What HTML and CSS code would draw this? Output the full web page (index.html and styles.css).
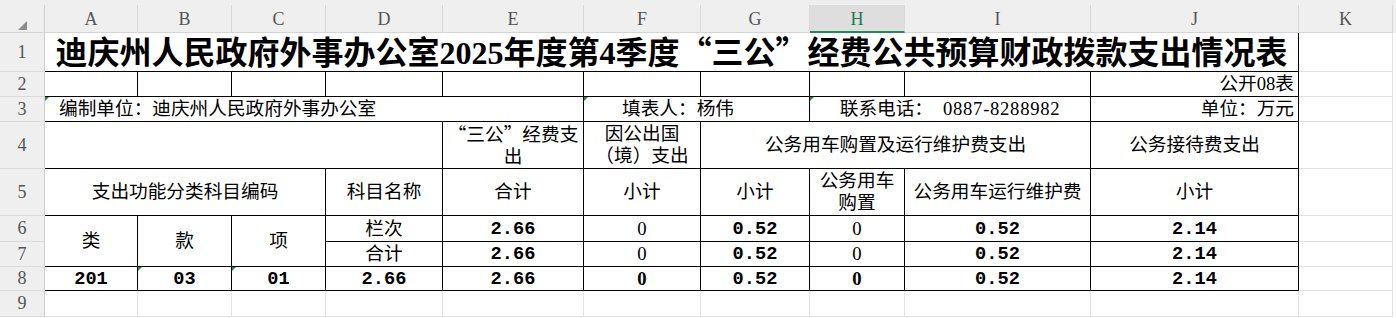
FILE: index.html
```html
<!DOCTYPE html>
<html lang="zh-CN">
<head>
<meta charset="utf-8">
<title>迪庆州人民政府外事办公室2025年度第4季度“三公”经费公共预算财政拨款支出情况表</title>
<link rel="stylesheet" href="styles.css">
</head>
<body>
<div class="sheet">
  <div class="strip"></div>

  <div class="ch corner"><span class="tri"></span></div>
  <div class="ch">A</div>
  <div class="ch">B</div>
  <div class="ch">C</div>
  <div class="ch">D</div>
  <div class="ch">E</div>
  <div class="ch">F</div>
  <div class="ch">G</div>
  <div class="ch sel">H</div>
  <div class="ch">I</div>
  <div class="ch">J</div>
  <div class="ch">K</div>

  <div class="rh">1</div>
  <div class="c s10 R B title"><span class="w">迪庆州人民政府外事办公室2025年度第4季度<span class="q">“</span>三公<span class="q">”</span>经费公共预算财政拨款支出情况表</span></div>
  <div class="c"></div>

  <div class="rh">2</div>
  <div class="c R B"></div>
  <div class="c R B"></div>
  <div class="c R B"></div>
  <div class="c R B"></div>
  <div class="c R B"></div>
  <div class="c R B"></div>
  <div class="c R B"></div>
  <div class="c R B"></div>
  <div class="c R B"></div>
  <div class="c R B right">公开08表</div>
  <div class="c"></div>

  <div class="rh">3</div>
  <div class="c s5 R B left flag unit">编制单位：迪庆州人民政府外事办公室</div>
  <div class="c s2 R B left flag filler">填表人：杨伟</div>
  <div class="c s2 R B flag phone"><span class="w">联系电话：<span class="tel">0887-8288982</span></span></div>
  <div class="c R B right">单位：万元</div>
  <div class="c"></div>

  <div class="rh">4</div>
  <div class="c s4 R B"></div>
  <div class="c R B wrap"><span class="w"><span class="q">“</span>三公<span class="q">”</span>经费支<br>出</span></div>
  <div class="c R B wrap"><span class="w">因公出国<br>（境）支出</span></div>
  <div class="c s3 R B">公务用车购置及运行维护费支出</div>
  <div class="c R B">公务接待费支出</div>
  <div class="c"></div>

  <div class="rh">5</div>
  <div class="c s3 R B">支出功能分类科目编码</div>
  <div class="c R B">科目名称</div>
  <div class="c R B">合计</div>
  <div class="c R B">小计</div>
  <div class="c R B">小计</div>
  <div class="c R B wrap"><span class="w">公务用车<br>购置</span></div>
  <div class="c R B">公务用车运行维护费</div>
  <div class="c R B">小计</div>
  <div class="c"></div>

  <div class="rh">6</div>
  <div class="c r2 R B">类</div>
  <div class="c r2 R B">款</div>
  <div class="c r2 R B">项</div>
  <div class="c R B">栏次</div>
  <div class="c R B n">2.66</div>
  <div class="c R B">0</div>
  <div class="c R B n">0.52</div>
  <div class="c R B">0</div>
  <div class="c R B n">0.52</div>
  <div class="c R B n">2.14</div>
  <div class="c"></div>

  <div class="rh">7</div>
  <div class="c R B">合计</div>
  <div class="c R B n">2.66</div>
  <div class="c R B">0</div>
  <div class="c R B n">0.52</div>
  <div class="c R B">0</div>
  <div class="c R B n">0.52</div>
  <div class="c R B n">2.14</div>
  <div class="c"></div>

  <div class="rh">8</div>
  <div class="c R B n">201</div>
  <div class="c R B n flag">03</div>
  <div class="c R B n flag">01</div>
  <div class="c R B n">2.66</div>
  <div class="c R B n">2.66</div>
  <div class="c R B bz">0</div>
  <div class="c R B n">0.52</div>
  <div class="c R B bz">0</div>
  <div class="c R B n">0.52</div>
  <div class="c R B n">2.14</div>
  <div class="c"></div>

  <div class="rh">9</div>
  <div class="c"></div>
  <div class="c"></div>
  <div class="c"></div>
  <div class="c"></div>
  <div class="c"></div>
  <div class="c"></div>
  <div class="c"></div>
  <div class="c"></div>
  <div class="c"></div>
  <div class="c"></div>
  <div class="c"></div>
</div>
</body>
</html>
```

FILE: styles.css
```css
* {
  box-sizing: border-box;
  margin: 0;
  padding: 0;
}

html, body {
  width: 1396px;
  height: 318px;
  overflow: hidden;
}

body {
  background: linear-gradient(#efefef 0, #efefef 33px, #ffffff 33px);
}

.sheet {
  display: grid;
  width: 1393px;
  grid-template-columns: 45px 93px 94px 94px 117px 141px 117px 109px 95px 186px 208px 94px;
  grid-template-rows: 5px 28px 39px 25px 25px 47px 47px 26px 25px 24px 26px;
  font-family: "Liberation Serif", "Noto Sans CJK SC", serif;
  font-size: 18.67px;
  color: #000;
  background: #fff;
}

.strip {
  grid-column: 1 / -1;
  background: #efefef;
}

.ch {
  background: #efefef;
  border-right: 1px solid #d9d9d9;
  border-bottom: 1px solid #d5d5d5;
  color: #555;
  font-size: 18px;
  display: flex;
  align-items: center;
  justify-content: center;
  padding-top: 2px;
}

.ch.sel {
  background: #dedede;
  color: #1b7d52;
  border-bottom: 2px solid #1e8b5b;
}

.corner {
  position: relative;
  border-right-color: #cfcfcf;
}

.tri {
  position: absolute;
  left: 18px;
  top: 16px;
  width: 0;
  height: 0;
  border-left: 9px solid transparent;
  border-bottom: 9px solid #8c8c8c;
}

.rh {
  grid-column: 1;
  background: #efefef;
  border-right: 1px solid #cfcfcf;
  border-bottom: 1px solid #dadada;
  color: #555;
  font-size: 18px;
  display: flex;
  align-items: center;
  justify-content: center;
}

.c {
  position: relative;
  border-right: 1px solid #e2e2e2;
  border-bottom: 1px solid #e2e2e2;
  display: flex;
  align-items: center;
  justify-content: center;
  text-align: center;
  line-height: 22px;
  white-space: nowrap;
}

.w {
  display: block;
  text-align: center;
}

.R { border-right-color: #000; }
.B { border-bottom-color: #000; }

.s2 { grid-column: span 2; }
.s3 { grid-column: span 3; }
.s4 { grid-column: span 4; }
.s5 { grid-column: span 5; }
.s10 { grid-column: span 10; }
.r2 { grid-row: span 2; }

.left { justify-content: flex-start; }
.right { justify-content: flex-end; padding-right: 4px; }

.unit { padding-left: 14px; }
.filler { padding-left: 38px; }
.tel { margin-left: 10px; letter-spacing: 0.7px; }

.wrap { white-space: normal; }

.title {
  font-size: 32px;
  font-weight: 700;
  line-height: 32px;
  align-items: flex-end;
  padding-bottom: 2px;
}

.q {
  font-family: "Noto Sans CJK SC", sans-serif;
  font-feature-settings: "fwid";
}

.n {
  font-family: "Liberation Mono", monospace;
  font-weight: 700;
}

.bz { font-weight: 700; }

.flag::before {
  content: "";
  position: absolute;
  left: 0;
  top: 0;
  width: 0;
  height: 0;
  border-top: 4px solid #1d8f3f;
  border-right: 4px solid transparent;
}
```
